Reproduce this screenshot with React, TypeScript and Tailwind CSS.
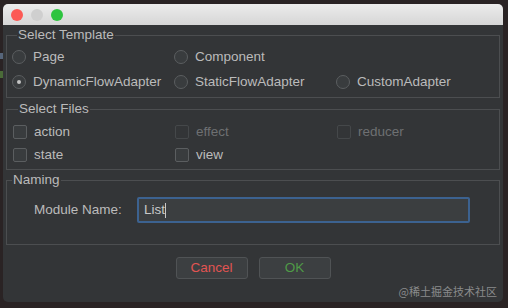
const font = { fontFamily: '"Liberation Sans", Arial, sans-serif' };

const Radio = ({ label, checked }: { label: string; checked?: boolean }) => (
	<div className="flex h-[16px] w-[162px] items-center gap-[7px]">
		<span className="flex h-[14px] w-[14px] items-center justify-center rounded-full border border-[#5b5e60] bg-[#393c3e]">
			{checked && <span className="h-[4px] w-[4px] rounded-full bg-[#c4c4c4]" />}
		</span>
		<span className="text-[13.5px] leading-[16px] text-[#bbbbbb]">{label}</span>
	</div>
);

const Check = ({ label, disabled }: { label: string; disabled?: boolean }) => (
	<div className="flex h-[16px] w-[162px] items-center gap-[7px]">
		<span
			className={
				disabled
					? 'h-[14px] w-[14px] rounded-[2px] border border-[#45484a] bg-[#333537]'
					: 'h-[14px] w-[14px] rounded-[2px] border border-[#5b5e60] bg-[#393c3e]'
			}
		/>
		<span
			className={
				disabled
					? 'text-[13.5px] leading-[16px] text-[#6e7072]'
					: 'text-[13.5px] leading-[16px] text-[#bbbbbb]'
			}
		>
			{label}
		</span>
	</div>
);

const Group = ({
	title,
	className,
	children
}: {
	title: string;
	className: string;
	children: React.ReactNode;
}) => (
	<fieldset className={`mx-[3px] border border-[#4c4e50] ${className}`}>
		<legend className="ml-[5px] px-[1px] text-[13.5px] leading-[16px] text-[#bbbbbb]">
			{title}
		</legend>
		{children}
	</fieldset>
);

export default function App() {
	return (
		<div className="flex h-[308px] w-[508px] bg-[#2a2324]" style={font}>
			<div className="flex w-[3px] flex-col pt-[53px]">
				<span className="h-[6px] w-[3px] bg-[#56657a]" />
				<span className="mt-[12px] h-[7px] w-[3px] bg-[#4a6a38]" />
			</div>
			<div className="mt-[4px] flex h-[298px] w-[500px] flex-col overflow-hidden rounded-[5px] bg-[#333537]">
				<div className="flex h-[21px] items-center gap-[8px] bg-gradient-to-b from-[#ececec] to-[#d6d6d6] pl-[8px]">
					<span className="h-[12px] w-[12px] rounded-full bg-[#fc5a55]" />
					<span className="h-[12px] w-[12px] rounded-full bg-[#cfcfcf]" />
					<span className="h-[12px] w-[12px] rounded-full bg-[#2ec43f]" />
				</div>

				<div className="relative flex flex-1 flex-col pt-[2px]">
					<Group title="Select Template" className="pb-[7px] pl-[5px] pt-[6px]">
						<div className="flex flex-col gap-[9px]">
							<div className="flex">
								<Radio label="Page" />
								<Radio label="Component" />
							</div>
							<div className="flex">
								<Radio label="DynamicFlowAdapter" checked />
								<Radio label="StaticFlowAdapter" />
								<Radio label="CustomAdapter" />
							</div>
						</div>
					</Group>

					<Group title="Select Files" className="mt-[3px] pb-[6px] pl-[6px] pt-[7px]">
						<div className="flex flex-col gap-[7px]">
							<div className="flex">
								<Check label="action" />
								<Check label="effect" disabled />
								<Check label="reducer" disabled />
							</div>
							<div className="flex">
								<Check label="state" />
								<Check label="view" />
							</div>
						</div>
					</Group>

					<Group title="Naming" className="mt-[2px] pb-[21px] pt-[9px]">
						<div className="flex items-center">
							<span className="ml-[27px] w-[103px] text-[13.5px] leading-[16px] text-[#bbbbbb]">
								Module Name:
							</span>
							<div className="flex h-[26px] w-[333px] items-center rounded-[2px] border-2 border-[#3c6290] bg-[#3b3e40] pl-[5px]">
								<span className="text-[13.5px] leading-[16px] text-[#c8c8c8]">List</span>
								<span className="h-[15px] w-px bg-[#c8c8c8]" />
							</div>
						</div>
					</Group>

					<div className="mt-[12px] flex justify-center gap-[11px]">
						<button className="h-[22px] w-[72px] rounded-[3px] border border-[#505355] bg-[#3c3f41] text-[13.5px] text-[#e25452]">
							Cancel
						</button>
						<button className="h-[22px] w-[72px] rounded-[3px] border border-[#505355] bg-[#3c3f41] text-[13.5px] text-[#4f9a47]">
							OK
						</button>
					</div>

					<span
						className="absolute bottom-[4px] right-[6px] text-[11px] leading-[14px] text-[#8a8b8c]"
						style={{ fontFamily: '"Noto Sans CJK SC", "Liberation Sans", sans-serif' }}
					>
						@稀土掘金技术社区
					</span>
				</div>
			</div>
		</div>
	);
}
